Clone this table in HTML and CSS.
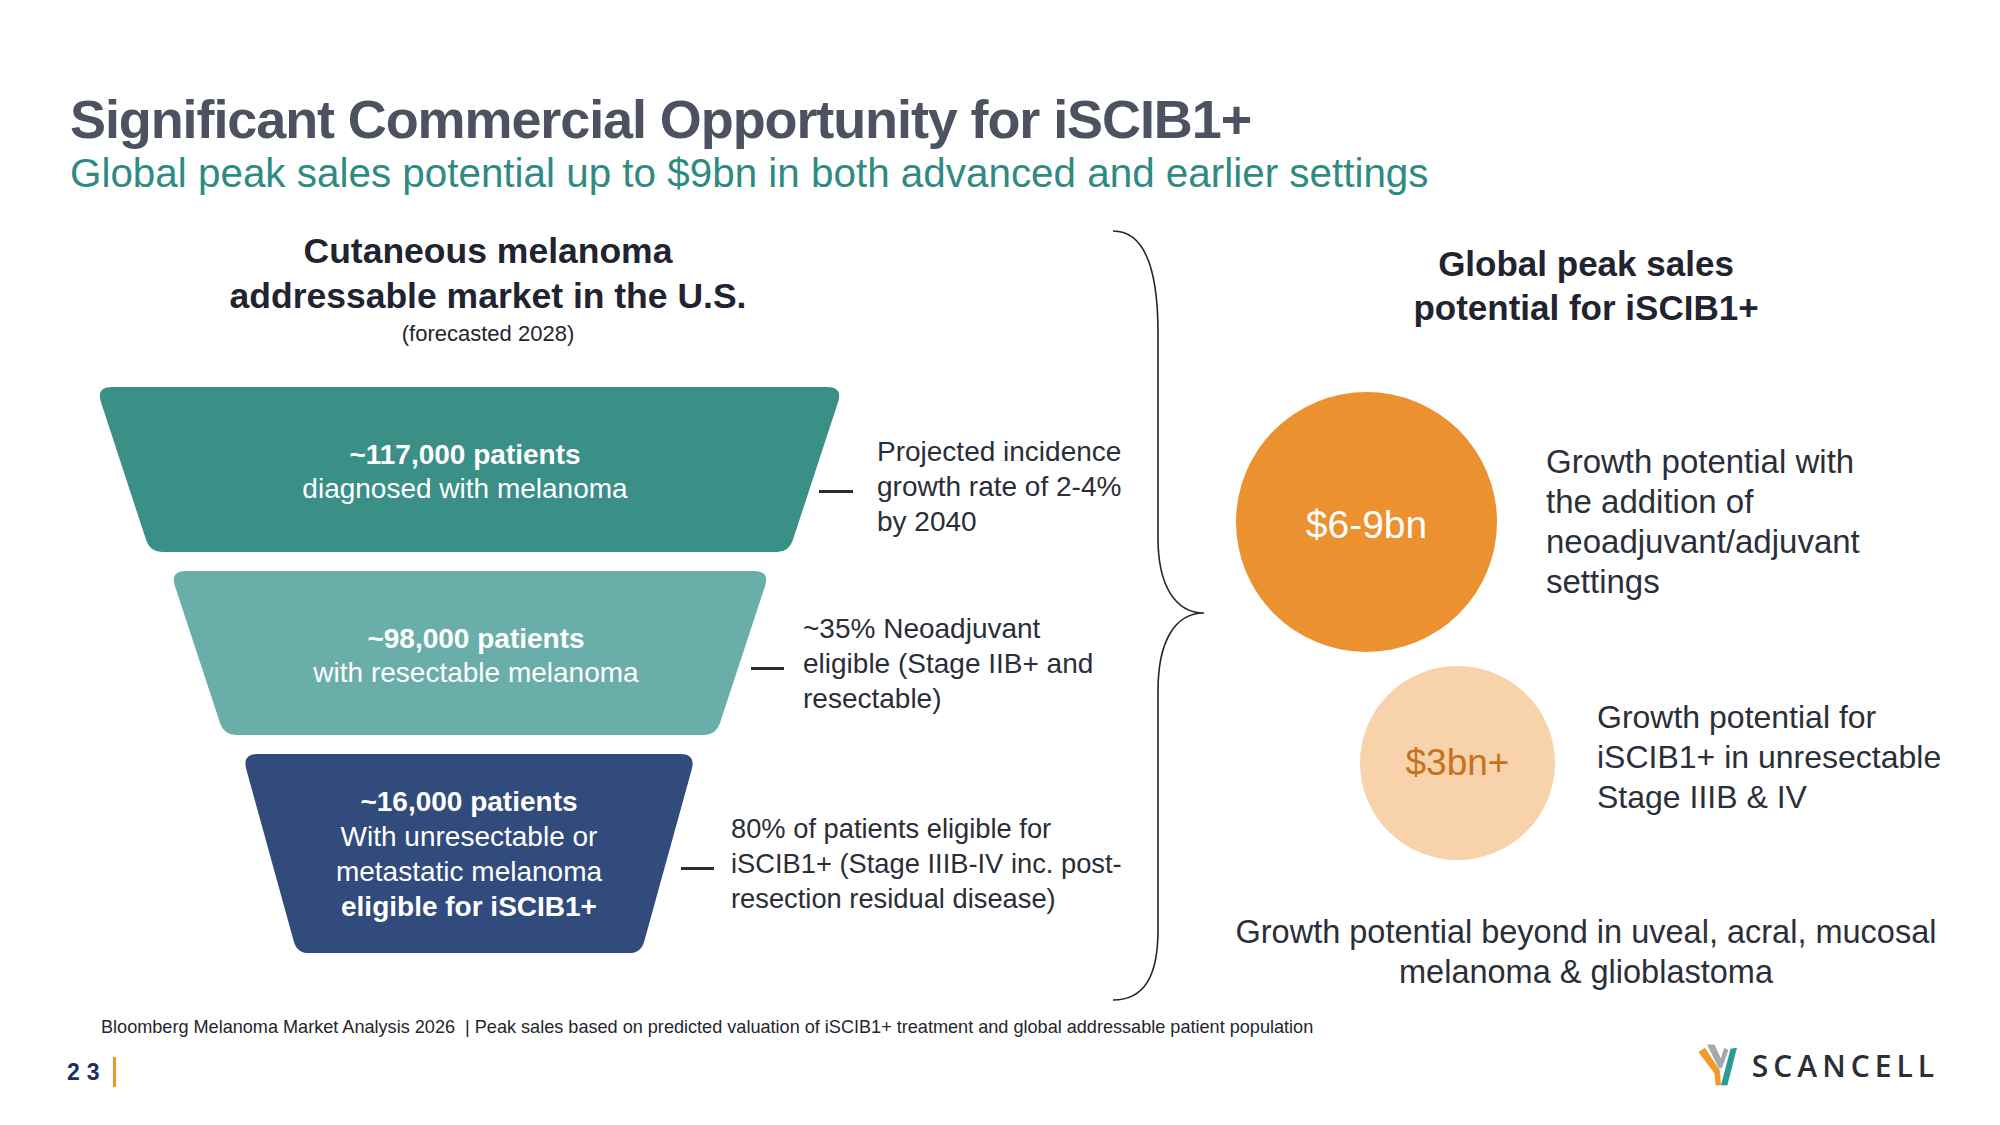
FILE: index.html
```html
<!DOCTYPE html>
<html lang="en">
<head>
<meta charset="utf-8">
<title>Significant Commercial Opportunity for iSCIB1+</title>
<link rel="stylesheet" href="styles.css">
</head>
<body>
<div class="slide">
  <header class="head">
    <h1 class="title">Significant Commercial Opportunity for iSCIB1+</h1>
    <p class="subtitle">Global peak sales potential up to $9bn in both advanced and earlier settings</p>
  </header>

  <main class="content">
    <section class="left">
      <div class="left-head">
        <h2 class="heading">Cutaneous melanoma<br>addressable market in the U.S.</h2>
        <p class="forecast">(forecasted 2028)</p>
      </div>

      <div class="funnel">
        <div class="row r1">
          <div class="band">
            <svg width="747" height="165" viewBox="0 0 747 165"><path class="b1" d="M16 0 L731 0 Q747 0 742 15.2 L696.7 153.6 Q693 165 681 165 L66 165 Q54 165 50.3 153.6 L5 15.2 Q0 0 16 0 Z"/></svg>
            <div class="band-text t1"><b>~117,000 patients</b><br>diagnosed with melanoma</div>
          </div>
          <div class="annot a1">
            <span class="dash"></span>
            <p>Projected incidence<br>growth rate of 2-4%<br>by 2040</p>
          </div>
        </div>

        <div class="row r2">
          <div class="band">
            <svg width="600" height="164" viewBox="0 0 600 164"><path class="b2" d="M16 0 L584 0 Q600 0 595 15.2 L549.8 152.6 Q546 164 534 164 L66 164 Q54 164 50.2 152.6 L5 15.2 Q0 0 16 0 Z"/></svg>
            <div class="band-text t2"><b>~98,000 patients</b><br>with resectable melanoma</div>
          </div>
          <div class="annot a2">
            <span class="dash"></span>
            <p>~35% Neoadjuvant<br>eligible (Stage IIB+ and<br>resectable)</p>
          </div>
        </div>

        <div class="row r3">
          <div class="band">
            <svg width="454" height="199" viewBox="0 0 454 199"><path class="b3" d="M16 0 L438 0 Q454 0 449.7 15.4 L402.2 187.4 Q399 199 387 199 L67 199 Q55 199 51.8 187.4 L4.3 15.4 Q0 0 16 0 Z"/></svg>
            <div class="band-text t3"><b>~16,000 patients</b><br>With unresectable or<br>metastatic melanoma<br><b>eligible for iSCIB1+</b></div>
          </div>
          <div class="annot a3">
            <span class="dash"></span>
            <p>80% of patients eligible for<br>iSCIB1+ (Stage IIIB-IV inc. post-<br>resection residual disease)</p>
          </div>
        </div>
      </div>
    </section>

    <div class="brace">
      <svg width="110" height="772" viewBox="0 0 110 772"><path d="M8 1 C40 1 53 40 53 103 L53 308 C53 355 70 383 99 383 C70 383 53 411 53 461 L53 700 C53 745 40 770 8 770" fill="none" stroke="#23262d" stroke-width="1.6"/></svg>
    </div>

    <section class="right">
      <h2 class="heading right-head">Global peak sales<br>potential for iSCIB1+</h2>
      <div class="pot pot1">
        <div class="circle c-big">$6-9bn</div>
        <p class="pot-text">Growth potential with<br>the addition of<br>neoadjuvant/adjuvant<br>settings</p>
      </div>
      <div class="pot pot2">
        <div class="circle c-small">$3bn+</div>
        <p class="pot-text pt2">Growth potential for<br>iSCIB1+ in unresectable<br>Stage IIIB &amp; IV</p>
      </div>
      <p class="beyond">Growth potential beyond in uveal, acral, mucosal<br>melanoma &amp; glioblastoma</p>
    </section>
  </main>

  <footer class="foot">
    <p class="source">Bloomberg Melanoma Market Analysis 2026 &nbsp;| Peak sales based on predicted valuation of iSCIB1+ treatment and global addressable patient population</p>
    <div class="bottom">
      <div class="pagenum"><span class="num">23</span><span class="bar"></span></div>
      <div class="logo">
        <svg width="56" height="52" viewBox="0 0 56 52">
          <polygon points="14,6 21,6 27,19 30,9 34,11 28,28 25,28" fill="#a7a8ab"/>
          <polygon points="6,13 12,9 26,30 27,44 22,44 21,33" fill="#f29a2e"/>
          <polygon points="36,10 42,9 33,44 27,44" fill="#2a9d92"/>
        </svg>
        <span class="logo-text">SCANCELL</span>
      </div>
    </div>
  </footer>
</div>
</body>
</html>
```

FILE: styles.css
```css
* {
  box-sizing: border-box;
  margin: 0;
  padding: 0;
}

html,
body {
  width: 2000px;
  height: 1125px;
}

body {
  background: #ffffff;
  font-family: "Liberation Sans", Arial, sans-serif;
  color: #2a2e37;
  overflow: hidden;
}

.slide {
  width: 2000px;
  height: 1125px;
  display: flex;
  flex-direction: column;
}

/* ---------- header ---------- */
.head {
  padding: 89px 0 0 70px;
}

.title {
  font-size: 54px;
  line-height: 60px;
  font-weight: 700;
  color: #4d5261;
  letter-spacing: -1.1px;
}

.subtitle {
  font-size: 40.4px;
  line-height: 48px;
  color: #2f8b81;
}

/* ---------- content ---------- */
.content {
  height: 819px;
  display: grid;
  grid-template-columns: 1105px 110px 742px;
}

.heading {
  font-size: 35px;
  line-height: 45px;
  font-weight: 700;
  color: #1f2430;
  text-align: center;
}

.left-head {
  width: 976px;
  padding-top: 32px;
  text-align: center;
}

.left-head .heading {
  font-size: 35.5px;
}

.forecast {
  font-size: 22px;
  line-height: 30px;
  color: #23262d;
}

.funnel {
  margin-top: 38px;
  display: flex;
  flex-direction: column;
  gap: 19px;
}

.row {
  display: flex;
  align-items: center;
}

.r1 { margin-left: 96px; }
.r2 { margin-left: 170px; }
.r3 { margin-left: 242px; }

.band {
  display: grid;
}

.band > * {
  grid-area: 1 / 1;
}

.band svg {
  display: block;
}

.b1 { fill: #3a8f87; }
.b2 { fill: #6aaeaa; }
.b3 { fill: #314b7d; }

.band-text {
  align-self: center;
  justify-self: center;
  text-align: center;
  color: #ffffff;
  font-size: 28px;
  line-height: 34px;
  padding-top: 5px;
}

.band-text b {
  font-weight: 700;
}

.t1 { padding-right: 9px; }
.t2 { padding-left: 12px; }
.t3 { line-height: 35px; padding-top: 0; }

.annot {
  display: flex;
  align-items: center;
}

.a1 { margin-left: -24px; padding-top: 34px; }
.a2 { margin-left: -19px; padding-top: 21px; }
.a3 { margin-left: -15px; padding-top: 20px; }

.dash {
  display: block;
  width: 33px;
  height: 3px;
  margin-top: 10px;
  background: #2a2e37;
  flex: none;
}

.annot p {
  font-size: 28px;
  line-height: 35px;
  color: #2a2e37;
  margin-left: 19px;
  white-space: nowrap;
}

.a1 p { margin-left: 24px; }
.a1 .dash { width: 34px; }
.a3 p { font-size: 27.3px; margin-left: 17px; }

/* ---------- brace ---------- */
.brace {
  padding-top: 33px;
}

.brace svg {
  display: block;
}

/* ---------- right ---------- */
.right {
  display: flex;
  flex-direction: column;
  padding-top: 45px;
}

.right-head {
  line-height: 44px;
}

.pot {
  display: flex;
  align-items: center;
}

.pot1 {
  margin-top: 62px;
  margin-left: 21px;
  gap: 49px;
}

.pot2 {
  margin-top: 14px;
  margin-left: 145px;
  gap: 42px;
}

.circle {
  flex: none;
  border-radius: 50%;
  display: flex;
  align-items: center;
  justify-content: center;
}

.c-big {
  width: 261px;
  height: 260px;
  background: #ec912f;
  color: #ffffff;
  font-size: 39px;
  padding-top: 6px;
}

.c-small {
  width: 195px;
  height: 194px;
  background: #f8d2aa;
  color: #c8711d;
  font-size: 37px;
}

.pot-text {
  font-size: 33px;
  line-height: 40px;
  color: #2b2f39;
  white-space: nowrap;
}

.pt2 {
  font-size: 32px;
  padding-bottom: 12px;
}

.beyond {
  margin-top: 52px;
  font-size: 32.5px;
  line-height: 40px;
  color: #2b2f39;
  text-align: center;
  white-space: nowrap;
}

/* ---------- footer ---------- */
.source {
  padding-left: 101px;
  font-size: 18.1px;
  line-height: 22px;
  color: #23262d;
  white-space: nowrap;
}

.bottom {
  margin-top: 2px;
  height: 52px;
  display: flex;
  align-items: center;
  justify-content: space-between;
  padding: 0 66px 0 67px;
}

.pagenum {
  display: flex;
  align-items: center;
  margin-top: 12px;
}

.num {
  font-size: 23px;
  line-height: 30px;
  font-weight: 700;
  color: #1c2e64;
  letter-spacing: 7px;
}

.bar {
  display: block;
  width: 3px;
  height: 30px;
  background: #f0962d;
  margin-left: 6px;
}

.logo {
  display: flex;
  align-items: center;
}

.logo svg {
  display: block;
  width: 60px;
  height: 56px;
}

.logo-text {
  font-family: "Open Sans", "Liberation Sans", sans-serif;
  font-weight: 600;
  font-size: 30px;
  line-height: 40px;
  letter-spacing: 5px;
  color: #2b2e35;
  margin-right: -5px;
}
```
